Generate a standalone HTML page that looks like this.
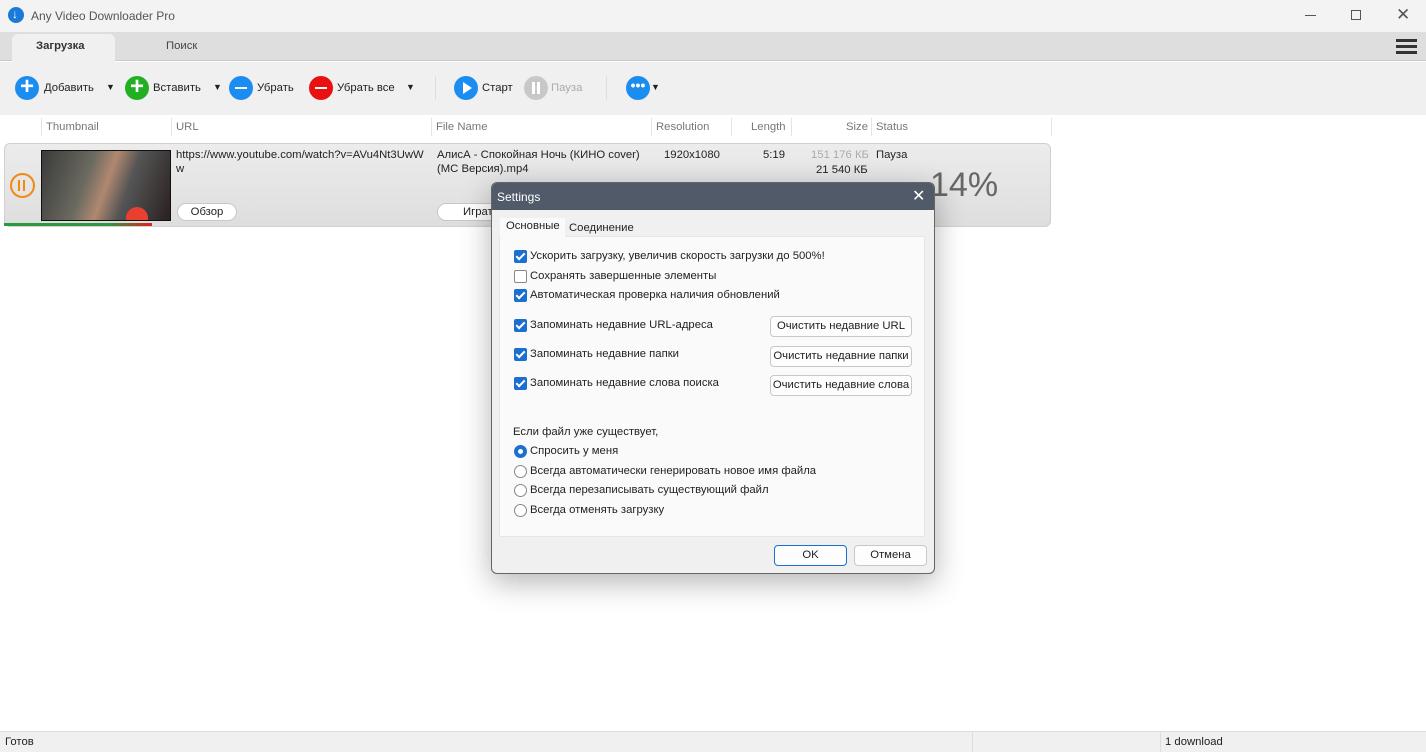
<!DOCTYPE html>
<html><head><meta charset="utf-8"><style>
*{box-sizing:border-box;margin:0;padding:0}
body{width:1426px;height:752px;overflow:hidden;font-family:"Liberation Sans",sans-serif;font-size:11.3px;color:#222;background:#fff;position:relative}
.a{position:absolute}
.t{position:absolute;white-space:nowrap}
.ic{position:absolute;width:24px;height:24px;border-radius:50%;color:#fff;text-align:center;font-weight:bold}
.cb{position:absolute;width:13px;height:13px;border-radius:2px;background:#1a6fd0}
.cb::after{content:"";position:absolute;left:4px;top:1px;width:3px;height:7px;border:solid #fff;border-width:0 2px 2px 0;transform:rotate(45deg)}
.cbe{position:absolute;width:13px;height:13px;border-radius:2px;border:1px solid #888;background:#fff}
.rd{position:absolute;width:13px;height:13px;border-radius:50%;border:1px solid #888;background:#fff}
.btn{position:absolute;border:1px solid #c8c8c8;border-radius:4px;background:#fdfdfd;text-align:center;font-size:11.3px;white-space:nowrap}
.hs{position:absolute;top:118px;width:1px;height:18px;background:#e4e4e4}
.hd{position:absolute;top:121px;color:#777;font-size:11.3px}
</style></head><body>
<div class="a" style="left:0;top:0;width:1426px;height:32px;background:#f3f3f3"></div>
<div class="a" style="left:8px;top:7px;width:16px;height:16px;border-radius:50%;background:#1a7ad8"></div>
<div class="t" style="left:12px;top:7px;color:#fff;font-size:12px;font-weight:bold">↓</div>
<div class="t" style="left:31px;top:9px;color:#555;font-size:12px">Any Video Downloader Pro</div>
<div class="a" style="left:1305px;top:15px;width:11px;height:1px;background:#555"></div>
<div class="a" style="left:1351px;top:10px;width:10px;height:10px;border:1px solid #555"></div>
<div class="t" style="left:1396px;top:5px;color:#555;font-size:17px">✕</div>
<div class="a" style="left:0;top:32px;width:1426px;height:29px;background:#dedede;border-bottom:1px solid #ccc"></div>
<div class="a" style="left:12px;top:34px;width:103px;height:28px;background:#f0f0f0;border-radius:6px 6px 0 0"></div>
<div class="t" style="left:36px;top:40px;font-weight:bold;color:#333">Загрузка</div>
<div class="t" style="left:166px;top:40px;color:#444">Поиск</div>
<div class="a" style="left:1396px;top:39px;width:21px;height:3px;background:#333;box-shadow:0 6px 0 #333,0 12px 0 #333"></div>
<div class="a" style="left:0;top:62px;width:1426px;height:53px;background:#f0f0f0"></div>
<div class="ic" style="left:15px;top:76px;background:#1c8df0;font-size:24px;line-height:22px">+</div>
<div class="t" style="left:44px;top:82px">Добавить</div><div class="t" style="left:106px;top:82px;font-size:9px">▼</div>
<div class="ic" style="left:125px;top:76px;background:#22b022;font-size:24px;line-height:22px">+</div>
<div class="t" style="left:153px;top:82px">Вставить</div><div class="t" style="left:213px;top:82px;font-size:9px">▼</div>
<div class="ic" style="left:229px;top:76px;background:#1c8df0"><div class="a" style="left:6px;top:11px;width:12px;height:2px;background:#fff"></div></div>
<div class="t" style="left:257px;top:82px">Убрать</div>
<div class="ic" style="left:309px;top:76px;background:#e81010"><div class="a" style="left:6px;top:11px;width:12px;height:2px;background:#fff"></div></div>
<div class="t" style="left:337px;top:82px">Убрать все</div><div class="t" style="left:406px;top:82px;font-size:9px">▼</div>
<div class="a" style="left:435px;top:76px;width:1px;height:24px;background:#ddd"></div>
<div class="ic" style="left:454px;top:76px;background:#1c8df0"><div class="a" style="left:9px;top:6px;border-left:9px solid #fff;border-top:6px solid transparent;border-bottom:6px solid transparent"></div></div>
<div class="t" style="left:482px;top:82px">Старт</div>
<div class="ic" style="left:524px;top:76px;background:#c8c8c8"><div class="a" style="left:8px;top:6px;width:3px;height:12px;background:#fff;box-shadow:5px 0 0 #fff"></div></div>
<div class="t" style="left:551px;top:82px;color:#aaa">Пауза</div>
<div class="a" style="left:606px;top:76px;width:1px;height:24px;background:#ddd"></div>
<div class="ic" style="left:626px;top:76px;background:#1c8df0;font-size:14px;line-height:18px">•••</div>
<div class="t" style="left:651px;top:82px;font-size:9px">▼</div>
<div class="hs" style="left:41px"></div><div class="hd" style="left:46px">Thumbnail</div>
<div class="hs" style="left:171px"></div><div class="hd" style="left:176px">URL</div>
<div class="hs" style="left:431px"></div><div class="hd" style="left:436px">File Name</div>
<div class="hs" style="left:651px"></div><div class="hd" style="left:656px">Resolution</div>
<div class="hs" style="left:731px"></div><div class="hd" style="left:751px">Length</div>
<div class="hs" style="left:791px"></div><div class="hd" style="left:846px">Size</div>
<div class="hs" style="left:871px"></div><div class="hd" style="left:876px">Status</div>
<div class="hs" style="left:1051px"></div>
<div class="a" style="left:4px;top:143px;width:1047px;height:84px;background:linear-gradient(#ececec,#dedede);border:1px solid #d0d0d0;border-radius:6px"></div>
<div class="a" style="left:10px;top:173px;width:25px;height:25px;border-radius:50%;border:2px solid #f08a10"></div>
<div class="a" style="left:18px;top:180px;width:2px;height:11px;background:#f08a10;box-shadow:5px 0 0 #f08a10"></div>
<div class="a" style="left:41px;top:150px;width:130px;height:71px;background:linear-gradient(110deg,#3a3a3a,#6a6a60 35%,#b08870 50%,#555 65%,#2a2020);border:1px solid #111;overflow:hidden"><div class="a" style="left:84px;top:56px;width:22px;height:14px;border-radius:11px 11px 0 0;background:#e84030"></div></div>
<div class="a" style="left:4px;top:223px;width:148px;height:3px;background:linear-gradient(90deg,#2a9a3a 70%,#e02020)"></div>
<div class="t" style="left:176px;top:149px">https://www.youtube.com/watch?v=AVu4Nt3UwW</div>
<div class="t" style="left:176px;top:163px">w</div>
<div class="btn" style="left:177px;top:203px;width:60px;height:18px;border-radius:9px;line-height:16px;background:#fff">Обзор</div>
<div class="t" style="left:437px;top:149px">АлисА - Спокойная Ночь (КИНО cover)</div>
<div class="t" style="left:437px;top:163px">(MC Версия).mp4</div>
<div class="btn" style="left:437px;top:203px;width:70px;height:18px;border-radius:9px;line-height:16px;background:#fff;text-align:left;padding-left:25px">Играть</div>
<div class="t" style="left:664px;top:149px">1920x1080</div>
<div class="t" style="left:763px;top:149px">5:19</div>
<div class="t" style="left:811px;top:149px;color:#aaa">151 176 КБ</div>
<div class="t" style="left:816px;top:164px">21 540 КБ</div>
<div class="t" style="left:876px;top:149px">Пауза</div>
<div class="t" style="left:930px;top:166px;font-size:34px;color:#666">14%</div>
<div class="a" style="left:0;top:731px;width:1426px;height:21px;background:#f0f0f0;border-top:1px solid #ddd"></div>
<div class="a" style="left:972px;top:732px;width:1px;height:20px;background:#ddd"></div>
<div class="a" style="left:1160px;top:732px;width:1px;height:20px;background:#ddd"></div>
<div class="t" style="left:5px;top:736px">Готов</div>
<div class="t" style="left:1165px;top:736px">1 download</div>
<div class="a" style="left:491px;top:182px;width:444px;height:392px;background:#f0f0f0;border:1px solid #666;border-radius:6px;box-shadow:0 8px 30px rgba(0,0,0,.3);overflow:hidden">
<div class="a" style="left:0;top:0;width:444px;height:27px;background:#505a68"></div>
<div class="t" style="left:5px;top:7px;color:#fff;font-size:12px">Settings</div>
<div class="t" style="left:420px;top:3px;color:#fff;font-size:16px">✕</div>
<div class="a" style="left:7px;top:53px;width:426px;height:301px;background:#fafafa;border:1px solid #e6e6e6"></div>
<div class="a" style="left:8px;top:35px;width:65px;height:20px;background:#fafafa"></div>
<div class="t" style="left:14px;top:37px">Основные</div>
<div class="t" style="left:77px;top:39px">Соединение</div>
<div class="cb" style="left:22px;top:67px"></div><div class="t" style="left:38px;top:67px">Ускорить загрузку, увеличив скорость загрузки до 500%!</div>
<div class="cbe" style="left:22px;top:87px"></div><div class="t" style="left:38px;top:87px">Сохранять завершенные элементы</div>
<div class="cb" style="left:22px;top:106px"></div><div class="t" style="left:38px;top:106px">Автоматическая проверка наличия обновлений</div>
<div class="cb" style="left:22px;top:136px"></div><div class="t" style="left:38px;top:136px">Запоминать недавние URL-адреса</div>
<div class="cb" style="left:22px;top:165px"></div><div class="t" style="left:38px;top:165px">Запоминать недавние папки</div>
<div class="cb" style="left:22px;top:194px"></div><div class="t" style="left:38px;top:194px">Запоминать недавние слова поиска</div>
<div class="btn" style="left:278px;top:133px;width:142px;height:21px;line-height:19px">Очистить недавние URL</div>
<div class="btn" style="left:278px;top:163px;width:142px;height:21px;line-height:19px">Очистить недавние папки</div>
<div class="btn" style="left:278px;top:192px;width:142px;height:21px;line-height:19px">Очистить недавние слова</div>
<div class="t" style="left:21px;top:243px">Если файл уже существует,</div>
<div class="rd" style="left:22px;top:262px;border:4px solid #1a6fd0"></div><div class="t" style="left:38px;top:262px">Спросить у меня</div>
<div class="rd" style="left:22px;top:282px"></div><div class="t" style="left:38px;top:282px">Всегда автоматически генерировать новое имя файла</div>
<div class="rd" style="left:22px;top:301px"></div><div class="t" style="left:38px;top:301px">Всегда перезаписывать существующий файл</div>
<div class="rd" style="left:22px;top:321px"></div><div class="t" style="left:38px;top:321px">Всегда отменять загрузку</div>
<div class="btn" style="left:282px;top:362px;width:73px;height:21px;line-height:19px;border-color:#1a6fd0">OK</div>
<div class="btn" style="left:362px;top:362px;width:73px;height:21px;line-height:19px">Отмена</div>
</div>
</body></html>
